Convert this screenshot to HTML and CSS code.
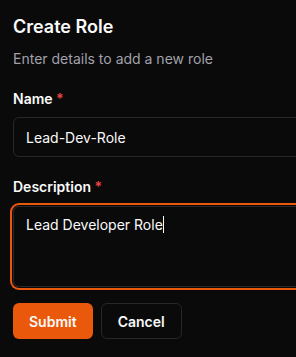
FILE: index.html
```html
<!DOCTYPE html>
<html lang="en">
<head>
    <meta charset="UTF-8">
    <title>Create Role</title>
    <link rel="stylesheet" href="styles.css">
</head>
<body>
<div class="role-dialog">
    <h2 class="dialog-title">Create Role</h2>
    <p class="dialog-subtitle">Enter details to add a new role</p>
    <form class="role-form">
        <div class="field">
            <label for="name">Name <span class="required">*</span></label>
            <input type="text" id="name" name="name" value="Lead-Dev-Role">
        </div>
        <div class="field">
            <label for="description">Description <span class="required">*</span></label>
            <div class="textarea focused">Lead Developer Role<span class="caret"></span></div>
        </div>
        <div class="actions">
            <button type="button" class="btn btn-submit">Submit</button>
            <button type="button" class="btn btn-cancel">Cancel</button>
        </div>
    </form>
</div>
</body>
</html>
```

FILE: styles.css
```css
body {
    margin: 0;
    background-color: #0a0a0a;
    color: #fafafa;
    font-family: 'Inter', 'Noto Sans', sans-serif;
    overflow: hidden;
}
.role-dialog {
    padding: 13px 0 0 13px;
    width: 420px;
}
.dialog-title {
    margin: 0;
    font-size: 18px;
    line-height: 28px;
    font-weight: 600;
}
.dialog-subtitle {
    margin: 8px 0 0 0;
    font-size: 14px;
    line-height: 20px;
    color: #a1a1aa;
}
.role-form {
    margin-top: 20px;
    display: flex;
    flex-direction: column;
    gap: 20px;
}
.field {
    display: flex;
    flex-direction: column;
    gap: 8px;
}
.field label {
    font-size: 14px;
    line-height: 20px;
    font-weight: 600;
}
.required {
    color: #ef4444;
}
input[type="text"] {
    box-sizing: border-box;
    height: 40px;
    padding: 0 12px;
    background: transparent;
    border: 1px solid #27272a;
    border-radius: 6px;
    color: #fafafa;
    font-family: inherit;
    font-size: 14px;
    outline: none;
}
.textarea {
    box-sizing: border-box;
    min-height: 81px;
    padding: 8px 12px;
    border: 1px solid #27272a;
    border-radius: 6px;
    font-size: 14px;
    line-height: 20px;
    margin-top: 1px;
}
.textarea.focused {
    box-shadow: 0 0 0 1px #0a0a0a, 0 0 0 3px #ea580c;
}
.caret {
    display: inline-block;
    width: 1px;
    height: 17px;
    background: #fafafa;
    vertical-align: -3px;
}
.actions {
    display: flex;
    gap: 8px;
    margin-top: -4px;
}
.btn {
    height: 36px;
    padding: 0 16px;
    border-radius: 6px;
    font-family: inherit;
    font-size: 14px;
    font-weight: 600;
    color: #fafafa;
    cursor: pointer;
}
.btn-submit {
    background-color: #ea580c;
    border: none;
}
.btn-cancel {
    background-color: #0a0a0a;
    border: 1px solid #27272a;
}
```
